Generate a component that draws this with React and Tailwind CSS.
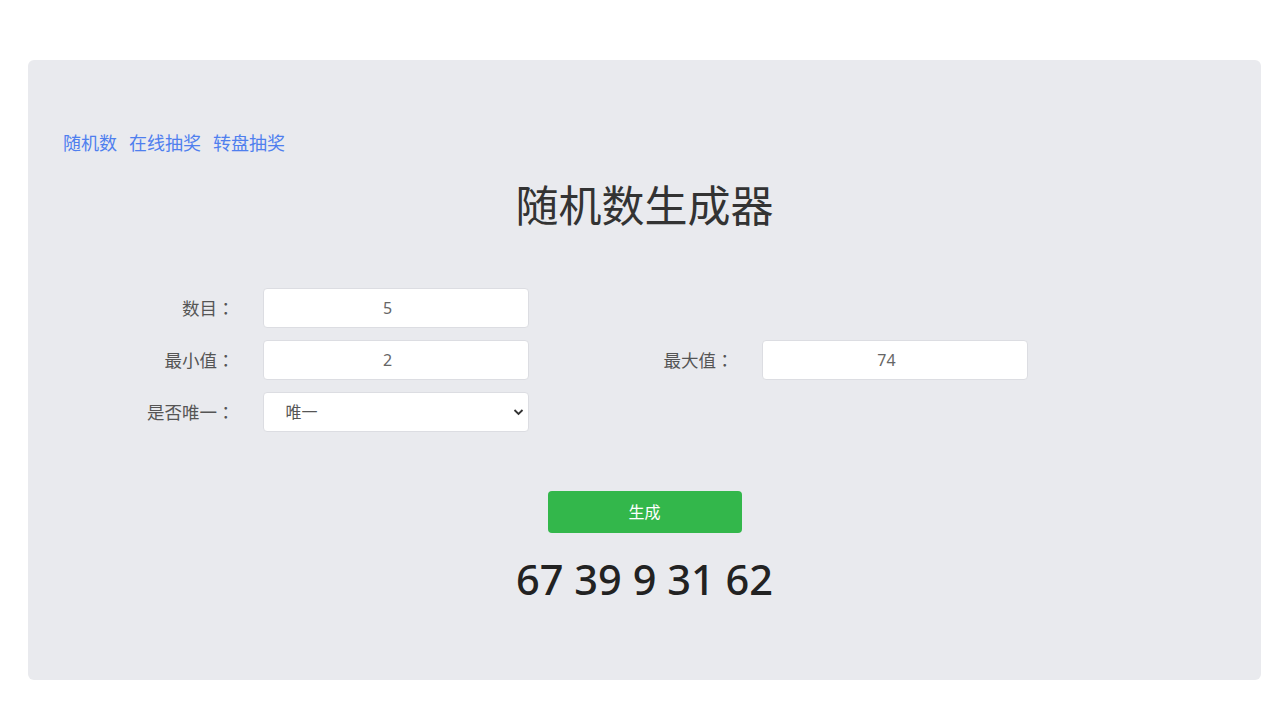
import React, { useState } from "react";

const font = { fontFamily: '"Noto Sans", "Noto Sans CJK SC", sans-serif' };

function Label({ text }) {
  return (
    <label className="w-[117px] pr-[28px] text-right text-[17.5px] text-[#555]">
      {text}
      <span style={{ fontFamily: '"Noto Sans CJK TC", sans-serif' }}>：</span>
    </label>
  );
}

function Field({ label, value, onChange }) {
  return (
    <div className="flex items-center">
      <Label text={label} />
      <input
        className="h-[40px] w-[266px] rounded-[4px] border border-[#dcdde2] bg-white pr-[16px] text-center text-[16px] text-[#666] outline-none"
        value={value}
        onChange={(e) => onChange(e.target.value)}
      />
    </div>
  );
}

export default function App() {
  const [form, setForm] = useState({ count: "5", min: "2", max: "74", unique: "唯一" });
  const [result, setResult] = useState("67 39 9 31 62");

  const handleChange = (key, value) => {
    setForm({ ...form, [key]: value });
  };

  const handleGenerate = () => {
    const n = Number(form.count || 0);
    const lo = Number(form.min || 0);
    const hi = Number(form.max || 0);
    const out = [];
    while (out.length < n) {
      const v = Math.floor(Math.random() * (hi - lo + 1)) + lo;
      if (form.unique === "唯一" && out.includes(v) && hi - lo + 1 >= n) continue;
      out.push(v);
    }
    setResult(out.join(" "));
  };

  return (
    <div className="min-h-[720px] bg-white pt-[60px]" style={font}>
      <div className="ml-[28px] h-[620px] w-[1233px] rounded-[6px] bg-[#e9eaee] px-[35px] pt-[71px]">
        {/* nav */}
        <div className="flex gap-[12px] text-[18px] leading-[24px] text-[#4f7fee]">
          <a href="#">随机数</a>
          <a href="#">在线抽奖</a>
          <a href="#">转盘抽奖</a>
        </div>

        <h1 className="mt-[19px] text-center text-[43px] leading-[64px] text-[#333]">
          随机数生成器
        </h1>

        {/* form */}
        <div className="mx-auto mt-[50px] flex w-[998px] flex-col gap-[12px]">
          <div className="grid grid-cols-2">
            <Field label="数目" value={form.count} onChange={(v) => handleChange("count", v)} />
          </div>
          <div className="grid grid-cols-2">
            <Field label="最小值" value={form.min} onChange={(v) => handleChange("min", v)} />
            <Field label="最大值" value={form.max} onChange={(v) => handleChange("max", v)} />
          </div>
          <div className="grid grid-cols-2">
            <div className="flex items-center">
              <Label text="是否唯一" />
              <div className="relative">
                <select
                  className="h-[40px] w-[266px] appearance-none rounded-[4px] border border-[#dcdde2] bg-white pl-[22px] text-[16px] text-[#555] outline-none"
                  value={form.unique}
                  onChange={(e) => handleChange("unique", e.target.value)}
                >
                  <option>唯一</option>
                  <option>不唯一</option>
                </select>
                <svg
                  className="pointer-events-none absolute right-[5px] top-[15px]"
                  width="11"
                  height="10"
                  viewBox="0 0 11 10"
                >
                  <path d="M1.5 3 L5.5 7 L9.5 3" fill="none" stroke="#333" strokeWidth="1.8" />
                </svg>
              </div>
            </div>
          </div>
        </div>

        <div className="mt-[59px] flex justify-center">
          <button
            onClick={handleGenerate}
            className="h-[42px] w-[194px] rounded-[4px] bg-[#33b74b] text-[16px] font-normal text-white"
          >
            生成
          </button>
        </div>

        <div className="mt-[22px] text-center text-[41.5px] font-medium leading-[48px] text-[#222]">
          {result}
        </div>
      </div>
    </div>
  );
}
